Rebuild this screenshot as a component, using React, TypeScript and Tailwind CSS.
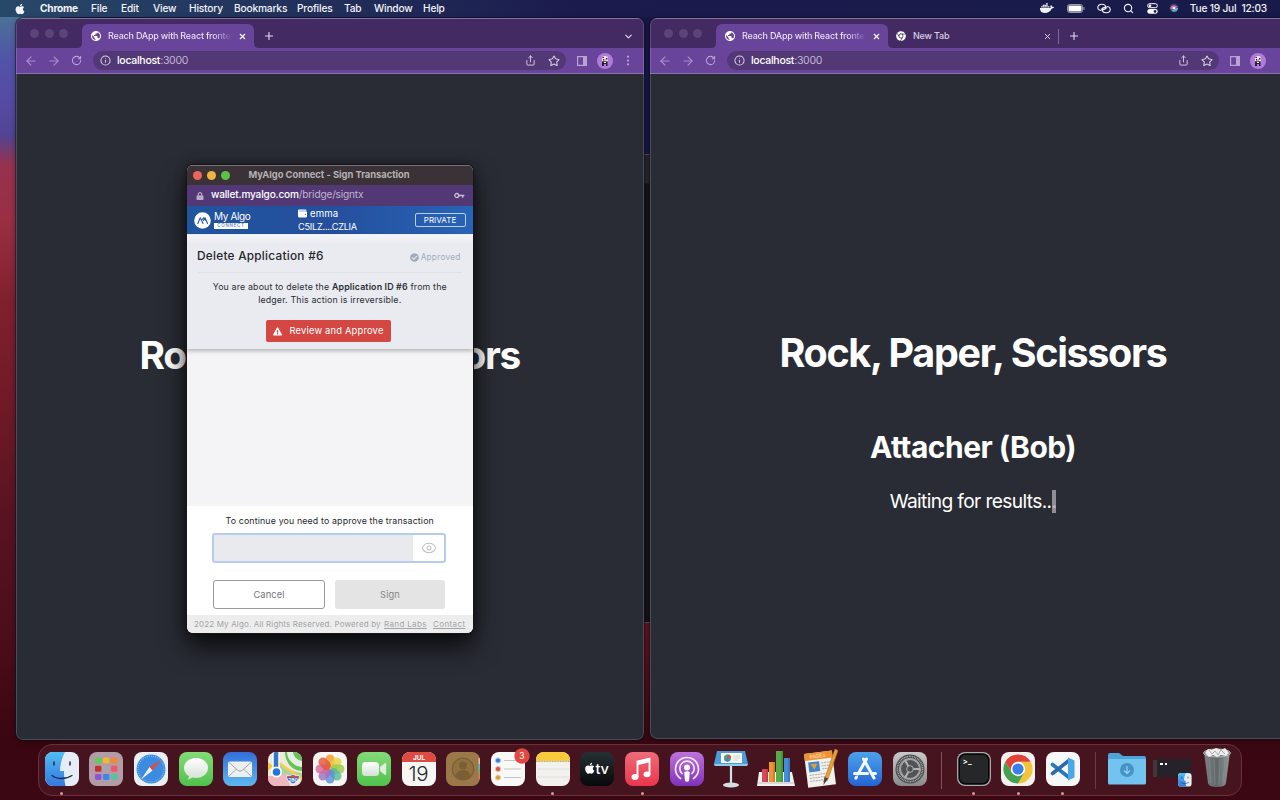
import type { ReactNode } from "react";
import { FaApple, FaDocker, FaChrome, FaWallet, FaCheckCircle, FaExclamationTriangle, FaLock } from "react-icons/fa";
import { MdPublic } from "react-icons/md";
import { ArrowLeft, ArrowRight, RotateCw, Info, Star, X, Plus, ChevronDown, Eye, Search, Share } from "lucide-react";

const menus: [string, string][] = [
  ["File", "w-[30px]"],
  ["Edit", "w-[32px]"],
  ["View", "w-[36px]"],
  ["History", "w-[45px]"],
  ["Bookmarks", "w-[63px]"],
  ["Profiles", "w-[47px]"],
  ["Tab", "w-[30px]"],
  ["Window", "w-[49px]"],
  ["Help", "w-[30px]"],
];

function MenuBar() {
  return (
    <header className="relative flex h-[17px] items-center bg-linear-to-r from-[#284869] via-[#1b1b4d] via-45% to-[#181b49] text-[10.2px] font-medium text-[#f3f4fa]">
      <FaApple className="ml-[14px] size-[12px]" />
      <span className="ml-[14px] w-[51px] font-bold tracking-[-0.250px]">Chrome</span>
      {menus.map(([m, w]) => (
        <span key={m} className={`${w} shrink-0 whitespace-nowrap tracking-[-0.180px]`}>{m}</span>
      ))}
      <div className="ml-auto flex items-center pr-[13px]">
        <FaDocker className="mr-[13px] size-[14px]" />
        <svg className="mr-[12px] h-[9px] w-[18px]" viewBox="0 0 18 9">
          <rect x=".5" y=".5" width="15" height="8" rx="2" fill="none" stroke="#9a9cb5" />
          <rect x="1.5" y="1.5" width="13" height="6" rx="1" fill="#fff" />
          <path d="M17 3v3" stroke="#9a9cb5" />
        </svg>
        <svg className="mr-[12px] h-[11px] w-[14px]" viewBox="0 0 14 11" fill="none" stroke="#f1f2fa" strokeWidth="1.100">
          <path d="M4.500 7.500C2.300 7.500.8 6.300.8 4.500S2.300 1.300 4.700 1.300c2.300 0 4 1.300 4 3 0 1.400-1.200 2.300-2.700 2.300-1 0-1.700-.5-1.700-1.200" />
          <path d="M9.500 3.500c2.200 0 3.700 1.200 3.700 3s-1.500 3.200-3.900 3.200c-2.300 0-4-1.300-4-3 0-1.400 1.200-2.300 2.700-2.300 1 0 1.700.5 1.700 1.200" />
        </svg>
        <Search className="mr-[13px] size-[11px]" strokeWidth={2.4} />
        <svg className="mr-[11px] h-[11px] w-[11px]" viewBox="0 0 11 11">
          <rect x=".6" y=".7" width="9.800" height="4" rx="2" fill="none" stroke="#fff" />
          <circle cx="3" cy="2.700" r="1.300" fill="#fff" />
          <rect x=".3" y="6" width="10.400" height="4.800" rx="2.400" fill="#fff" />
          <circle cx="8" cy="8.400" r="1.300" fill="#1b1b4d" />
        </svg>
        <svg className="mr-[11px] size-[10px]" viewBox="0 0 11 11">
          <circle cx="5.500" cy="5.500" r="5" fill="#343a70" />
          <path d="M1 6c2-5 5-4 9-2-2 0-3 5-9 2z" fill="#d76b9c" />
          <path d="M2 7c3 2 5-3 8-1-1 4-6 5-8 1z" fill="#51b8cf" />
          <circle cx="5.500" cy="5.500" r="1.500" fill="#f0efff" />
        </svg>
        <span className="whitespace-pre tracking-[-0.200px]">Tue 19 Jul  12:03</span>
      </div>
    </header>
  );
}

function ActiveTab() {
  return (
    <div className="relative flex h-6 w-[172px] items-center rounded-t-[6px] bg-[#69449b] pl-[9px]">
      <svg className="absolute bottom-0 -left-[5px] size-[5px]" viewBox="0 0 5 5"><path d="M0 5Q5 5 5 0V5z" fill="#69449b" /></svg>
      <svg className="absolute -right-[5px] bottom-0 size-[5px]" viewBox="0 0 5 5"><path d="M5 5Q0 5 0 0V5z" fill="#69449b" /></svg>
      <MdPublic className="-ml-px size-[12px] shrink-0 text-white" />
      <span className="ml-[6px] w-[124px] shrink-0 overflow-hidden bg-linear-to-r from-[#f0eaf7] from-85% to-[#69449b] bg-clip-text text-[9px] font-medium tracking-[-0.220px] whitespace-nowrap text-transparent">
        Reach DApp with React frontend
      </span>
      <X className="ml-[6px] size-[9px] text-white" strokeWidth={3} />
    </div>
  );
}

function Avatar() {
  return (
    <svg className="size-[16px] shrink-0" viewBox="0 0 16 16">
      <circle cx="8" cy="8" r="8" fill="#b17add" />
      <path d="M5 5q0-2 3-2t3 2v3H5z" fill="#eee9e2" />
      <path d="M5.500 4h1.500v1H5.500zM9 5h1.500v1.500H9zM6 6h1v1.500H6zM5 8.500h5.500V13H9v-2H7v2H5zM7.500 6.500h1v1h-1z" fill="#272129" />
      <path d="M7 9h2v1H7z" fill="#fff" />
    </svg>
  );
}

function SidePanel() {
  return (
    <svg className="size-[10px] shrink-0" viewBox="0 0 10 10">
      <path d="M.6.6h8.800v8.800H.6z" fill="none" stroke="#b8a3d3" strokeWidth="1.200" />
      <path d="M6 0h4v10H6z" fill="#b8a3d3" />
    </svg>
  );
}

function Toolbar({ right }: { right?: boolean }) {
  return (
    <div className="flex h-[26px] items-center border-b border-[#8a70b0] bg-[#69449b] pl-[8px]">
      <ArrowLeft className="size-[14px] text-[#a98fc9]" strokeWidth={1.9} />
      <ArrowRight className="ml-[9px] size-[14px] text-[#a98fc9]" strokeWidth={1.9} />
      <RotateCw className="ml-[10px] size-[11px] text-[#b9a5d5]" strokeWidth={2.2} />
      <div className={`ml-[11px] flex h-[19px] shrink-0 items-center rounded-full bg-[#523976] pl-[7px] ${right ? "w-[492px]" : "w-[473px]"}`}>
        <Info className="size-[11px] text-[#d8cde6]" strokeWidth={2.2} />
        <span className="ml-[6px] pt-px text-[10.500px] font-medium tracking-[-0.280px] text-white">
          localhost<span className="font-normal text-[#c3b3d6]">:3000</span>
        </span>
        <Share className="ml-auto size-[11px] text-[#d5c9e4]" strokeWidth={2.1} />
        <Star className="mr-[6px] ml-[12px] size-[12px] text-[#d5c9e4]" strokeWidth={2.2} />
      </div>
      <div className="ml-[11px] flex shrink-0 items-center gap-[10px]">
        <SidePanel />
        <Avatar />
        {!right && (
          <svg className="ml-[3px] h-[11px] w-[4px]" viewBox="0 0 4 12" fill="#b8a3d3"><circle cx="2" cy="1.800" r="1.200" /><circle cx="2" cy="6" r="1.200" /><circle cx="2" cy="10.200" r="1.200" /></svg>
        )}
      </div>
    </div>
  );
}

function LightsOff() {
  return (
    <div className="flex gap-[5.500px] pt-[10px] pl-[14px]">
      <i className="size-[9px] rounded-full bg-[#5b4478]" />
      <i className="size-[9px] rounded-full bg-[#5b4478]" />
      <i className="size-[9px] rounded-full bg-[#5b4478]" />
    </div>
  );
}

function BrowserWindow({ right, place, children }: { right?: boolean; place: string; children: ReactNode }) {
  return (
    <section className={`absolute ${place} overflow-hidden rounded-[7px] bg-[#292c34] shadow-[0_0_0_1px_#0c0c2080,0_2px_6px_#0005]`}>
      <div className="flex h-[30px] justify-start border-t border-[#6d5a86] bg-[#432a62]">
        <div className="w-[66px]"><LightsOff /></div>
        <div className="flex flex-1 items-end">
          <ActiveTab />
          {right && (
            <div className="flex h-6 items-center text-[#d9cfe6]">
              <FaChrome className="ml-[8px] size-[10px] text-white" />
              <span className="ml-[7px] w-[130px] text-[9px] font-medium tracking-[-0.200px]">New Tab</span>
              <X className="size-[9px]" strokeWidth={2.6} />
              <i className="ml-[6px] h-[15px] w-px bg-[#7c6796]" />
            </div>
          )}
          <div className="flex h-6 items-center">
            <Plus className="ml-[9px] size-[12px] text-[#e4dcee]" strokeWidth={2.2} />
          </div>
          <div className={`ml-auto flex h-6 items-center ${right ? "pr-0" : "pr-[10px]"}`}>
            <ChevronDown className={`size-[11px] text-[#e4dcee] ${right ? "mr-[1px]" : ""}`} strokeWidth={2.4} />
          </div>
        </div>
      </div>
      <Toolbar right={right} />
      {children}
      <div className={`pointer-events-none absolute inset-0 rounded-[7px] border border-[#ffffff28] ${right ? "border-r-0" : ""}`} />
    </section>
  );
}

function Popup() {
  return (
    <section className="absolute top-[165px] left-[187px] flex h-[468px] w-[285.500px] flex-col overflow-hidden rounded-[6px] bg-[#f4f4f7] shadow-[0_0_0_1px_#15161b,0_14px_26px_#000b,0_0_12px_#0007]">
      <div className="flex h-[20px] shrink-0 items-center border-t border-[#77727a] bg-[#3a3237]">
        <i className="ml-[6px] size-[9px] rounded-full bg-[#ed6559]" />
        <i className="ml-[5px] size-[9px] rounded-full bg-[#f0b540]" />
        <i className="ml-[5px] size-[9px] rounded-full bg-[#5bc148]" />
        <span className="ml-[18.500px] text-[9.400px] font-bold tracking-[-0.030px] whitespace-nowrap text-[#b6b1b4]">MyAlgo Connect - Sign Transaction</span>
      </div>
      <div className="flex h-[21px] shrink-0 items-center bg-[#523976] px-[8px]">
        <FaLock className="ml-px size-[8px] text-[#b9aac9]" />
        <span className="ml-[7px] pb-px text-[10.100px] font-medium tracking-[-0.170px] text-white">
          wallet.myalgo.com<span className="font-normal text-[#c1b2d2]">/bridge/signtx</span>
        </span>
        <svg className="mb-px ml-auto h-[7px] w-[11px]" viewBox="0 0 11 7" fill="none" stroke="#c9bdd8" strokeWidth="1.300"><circle cx="2.800" cy="3.500" r="2" /><path d="M4.800 3.500h5.500M8.700 3.500v2.200" /></svg>
      </div>
      <div className="flex h-[28px] shrink-0 items-center bg-linear-to-r from-[#20559f] via-[#244f9d] to-[#2864b6] px-[7px] text-white">
        <svg className="size-[17px] shrink-0" viewBox="0 0 17 17">
          <circle cx="8.500" cy="8.500" r="8.300" fill="#fff" />
          <path d="M3.800 11.500 6.200 5.800l2.800 5.700M8.300 7.500l1.300-1.700 2.200 2.700M9.500 8.500l1.500-2.700 2.500 5.700" fill="none" stroke="#2459a3" strokeWidth="1.100" strokeLinecap="round" strokeLinejoin="round" />
        </svg>
        <div className="ml-[3px] flex w-[84px] flex-col">
          <span className="text-[10px] leading-[11px] tracking-[-0.350px]">My Algo</span>
          <span className="mt-px h-[6px] w-[34px] bg-white text-center text-[4.500px] leading-[6px] font-semibold tracking-[0.700px] text-[#6d89b8]">CONNECT</span>
        </div>
        <div className="flex flex-col text-[9.200px] leading-[13px]">
          <span className="flex items-center gap-[3px] text-[9.600px] tracking-[0.100px]"><FaWallet className="size-[9px]" />emma</span>
          <span className="tracking-[-0.250px]">C5ILZ....CZLIA</span>
        </div>
        <span className="ml-auto flex h-[14px] w-[51px] items-center justify-center rounded-[2px] border border-[#b9cdea] text-[8px] tracking-[0.050px]">PRIVATE</span>
      </div>
      <div className="mt-[1px] flex h-[114px] shrink-0 flex-col bg-linear-to-b from-[#f5f5f8] to-[#e9ebf1] to-8% shadow-[0_2px_4px_#0004]">
        <div className="mx-[11px] flex h-[38px] items-center justify-between border-b border-[#dfe1e7] pt-[7px]">
          <span className="-ml-px text-[11.800px] font-medium tracking-[0.260px] text-[#24262b]">Delete Application #6</span>
          <span className="flex items-center gap-[2px] pr-px text-[8.300px] tracking-[0.220px] text-[#9eacbf]"><FaCheckCircle className="size-[9px]" />Approved</span>
        </div>
        <p className="mt-[7px] text-center text-[8.800px] leading-[13px] tracking-[0.170px] whitespace-nowrap text-[#292d33]">
          You are about to delete the <b className="font-semibold">Application ID #6</b> from the<br />ledger. This action is irreversible.
        </p>
        <div className="ml-[79px] mt-[14px] flex h-[22px] w-[125px] items-center justify-center gap-[7px] rounded-[2px] bg-[#d54743] text-[9.400px] tracking-[0.180px] whitespace-nowrap text-white">
          <FaExclamationTriangle className="size-[9px] shrink-0" />Review and Approve
        </div>
      </div>
      <div className="mt-auto flex h-[109px] shrink-0 flex-col bg-white">
        <span className="mt-[9px] text-center text-[8.800px] leading-[11px] tracking-[0.150px] text-[#25282d]">To continue you need to approve the transaction</span>
        <div className="mt-[7px] ml-[25px] flex h-[30px] w-[234px] rounded-[3px] border-2 border-[#b6cbee]">
          <div className="flex-1 bg-[#e9eaed]" />
          <div className="flex w-[31px] items-center justify-center"><Eye className="size-[16px] text-[#bfc1c5]" strokeWidth={1.6} /></div>
        </div>
        <div className="mt-[17px] ml-[26px] flex h-[29px] w-[232px] gap-[10px] text-[9.300px] tracking-[0.100px] text-[#777]">
          <span className="flex flex-1 items-center justify-center rounded-[3px] border border-[#999]">Cancel</span>
          <span className="flex flex-1 items-center justify-center rounded-[3px] bg-[#e4e4e4] text-[#858585]">Sign</span>
        </div>
      </div>
      <footer className="flex h-[18px] shrink-0 items-center bg-[#ededee] pl-[7px] text-[8px] whitespace-nowrap text-[#a3a4a7]">
        <span className="w-[190px] tracking-[0.150px]">2022 My Algo. All Rights Reserved. Powered by</span>
        <u className="mr-[7px] w-[42px] tracking-[0.350px]">Rand Labs</u>
        <u className="tracking-[0.400px]">Contact</u>
      </footer>
    </section>
  );
}

function Tile({ fill, children }: { fill: string; children?: ReactNode }) {
  return (
    <>
      <rect width="34" height="34" rx="8" fill={fill} />
      {children}
    </>
  );
}

function DockItem({ dot, children }: { dot?: boolean; children: ReactNode }) {
  return (
    <div className="flex h-full w-[44.650px] shrink-0 flex-col items-center pt-[7px]">
      <svg className="size-[34px] shrink-0 overflow-visible" viewBox="0 0 34 34">{children}</svg>
      {dot && <i className="mt-[6px] size-[3px] rounded-full bg-[#d59a9a]" />}
    </div>
  );
}

const padColors = ["#5fce56", "#f3b62c", "#ee8a31", "#c4302d", "#a3a7ad", "#f25566", "#9254d6", "#3d86ee", "#55c3a0"];
const petals = ["#f19a2c", "#e3d444", "#9bc84b", "#56b99b", "#5a90d5", "#9b72c4", "#d8699a", "#e7553f"];

function Finder() {
  return (
    <>
      <rect width="34" height="34" rx="8" fill="#e6edf6" />
      <path d="M8 0h12c-3 6-5 12-5 19h4c0 5 .5 11 1.500 15H8a8 8 0 0 1-8-8V8a8 8 0 0 1 8-8z" fill="url(#finder)" />
      <path d="M9 10v3M25 10v3" stroke="#1d2c4a" strokeWidth="1.500" strokeLinecap="round" />
      <path d="M7 23.500c5 4 14 4 20 0" stroke="#1d2c4a" strokeWidth="1.300" fill="none" strokeLinecap="round" />
    </>
  );
}

function Dock() {
  return (
    <nav className="absolute top-[744px] left-[38px] flex h-[52px] w-[1204px] rounded-[14px] border border-[#6a2f3a] bg-[#46141f] pl-[0.400px]">
      <svg className="absolute size-0">
        <defs>
          <linearGradient id="finder" x2="0" y2="1"><stop stopColor="#51bdf2" /><stop offset="1" stopColor="#3479df" /></linearGradient>
          <linearGradient id="green" x2="0" y2="1"><stop stopColor="#84dc78" /><stop offset="1" stopColor="#4fc24b" /></linearGradient>
          <linearGradient id="blue" x2="0" y2="1"><stop stopColor="#336fd9" /><stop offset="1" stopColor="#5db9ee" /></linearGradient>
          <linearGradient id="store" x2="0" y2="1"><stop stopColor="#4ba2eb" /><stop offset="1" stopColor="#2465d4" /></linearGradient>
          <linearGradient id="pod" x2="0" y2="1"><stop stopColor="#bd73dc" /><stop offset="1" stopColor="#8131ba" /></linearGradient>
          <linearGradient id="music" x2="0" y2="1"><stop stopColor="#ee6c78" /><stop offset="1" stopColor="#ea354c" /></linearGradient>
          <linearGradient id="white" x2="0" y2="1"><stop stopColor="#fff" /><stop offset="1" stopColor="#d3dfd4" /></linearGradient>
          <linearGradient id="tv" x2="0" y2="1"><stop stopColor="#263034" /><stop offset="1" stopColor="#08090a" /></linearGradient>
          <linearGradient id="gray" x2="0" y2="1"><stop stopColor="#c9c9c9" /><stop offset="1" stopColor="#8a8a8b" /></linearGradient>
          <linearGradient id="bin"><stop stopColor="#7e8284" /><stop offset=".5" stopColor="#606769" /><stop offset="1" stopColor="#969a9b" /></linearGradient>
          <clipPath id="tile"><rect width="34" height="34" rx="8" /></clipPath>
        </defs>
      </svg>
      <DockItem dot><Finder /></DockItem>
      <DockItem>
        <Tile fill="#b29ca6">
          {padColors.map((c, i) => <rect key={i} x={6 + (i % 3) * 8} y={5.500 + Math.floor(i / 3) * 8.200} width="6.400" height="6" rx="1.300" fill={c} />)}
        </Tile>
      </DockItem>
      <DockItem>
        <Tile fill="#eceff2">
          <circle cx="17" cy="17" r="14.500" fill="#3b8ce1" />
          <circle cx="17" cy="17" r="13" fill="none" stroke="#a9d2f7" strokeWidth="1.300" strokeDasharray=".6 1.500" />
          <path d="M28 7.500 15.500 15l3 3.500z" fill="#e24b42" /><path d="M7 27.500l8.500-12.500 3 3.500z" fill="#f1f1f1" />
        </Tile>
      </DockItem>
      <DockItem>
        <Tile fill="url(#green)"><path d="M17 6c7 0 12 4.500 12 10s-5 10-12 10c-1.500 0-2.800-.2-4-.5-1 1-2.500 1.900-4.500 2 1.200-1 1.600-2.200 1.500-3.200C7 22.500 5 19.500 5 16 5 10.500 10 6 17 6z" fill="url(#white)" /></Tile>
      </DockItem>
      <DockItem>
        <Tile fill="url(#blue)"><rect x="5" y="9.500" width="24" height="15.500" rx="2" fill="#eeefef" /><path d="M5.500 10 15 18.500q2 1.500 4 0L28.500 10M5.500 24.500l8-7.500M28.500 24.500l-8-7.500" fill="none" stroke="#a3a8ab" /></Tile>
      </DockItem>
      <DockItem>
        <Tile fill="#efe9dc">
          <g clipPath="url(#tile)">
            <path d="M17 0h17v19C24 19 17 10 17 0z" fill="#62c458" />
            <path d="M22-2a13 13 0 0 0 14 14" stroke="#e4efdf" strokeWidth="6" fill="none" />
            <path d="M12 13c6 2 10 6 22 8v4H13z" fill="#a6d596" />
            <path d="M11 11l23 16" stroke="#f5cd54" strokeWidth="2.500" />
            <path d="M11 24l9-3 2 13H0V24z" fill="#f0b6bd" />
            <path d="M0 10l5 4-5 5z" fill="#f5c83c" />
            <path d="M8 0v19" stroke="#fff" strokeWidth="7" /><path d="M8 0v17" stroke="#2f79c8" strokeWidth="4.500" />
            <circle cx="8.500" cy="20" r="5.500" fill="#fff" /><circle cx="8.500" cy="20" r="3.800" fill="#2675d8" />
          </g>
          <path d="M19 23.500q2.500 1 6-1 3.500 2 6 1 1.500 5-6 8.500-7.500-3.500-6-8.500z" fill="#2b6cc0" stroke="#fff" strokeWidth=".7" /><path d="M19.500 24q2.500 1 5.500-1 3 2 5.500 1l.3 1.500H19.300z" fill="#dc4a43" />
          <text x="25" y="29.800" textAnchor="middle" fontSize="4.800" fontWeight="700" fill="#fff">280</text>
        </Tile>
      </DockItem>
      <DockItem>
        <Tile fill="#f6f6f4">
          {petals.map((c, i) => <rect key={c} x="12.500" y="2.500" width="9" height="14" rx="4.500" fill={c} opacity=".82" transform={`rotate(${i * 45} 17 17)`} />)}
        </Tile>
      </DockItem>
      <DockItem><Tile fill="url(#green)"><rect x="5" y="10" width="17" height="14" rx="3.500" fill="url(#white)" /><path d="M23 15l5-4q1.200 0 1.200 1v10q0 1-1.200 1l-5-4z" fill="#e2ece1" /></Tile></DockItem>
      <DockItem>
        <Tile fill="#f6f6f5">
          <path d="M0 10V8a8 8 0 0 1 8-8h18a8 8 0 0 1 8 8v2z" fill="#dc4a41" />
          <text x="17" y="8" textAnchor="middle" fontSize="6.500" fontWeight="700" fill="#fff">JUL</text>
          <text x="16.500" y="28.500" textAnchor="middle" fontSize="20.500" fontWeight="300" letterSpacing="-.3" fill="#29292b">19</text>
        </Tile>
      </DockItem>
      <DockItem>
        <Tile fill="#9b7848">
          <g clipPath="url(#tile)"><path d="M33.500 6v6" stroke="#dcc6a1" strokeWidth="2" /><path d="M33.500 12v5" stroke="#58b8e4" strokeWidth="2" /><path d="M33.500 17v5" stroke="#67b968" strokeWidth="2" /><path d="M33.500 22v5" stroke="#dd7954" strokeWidth="2" /></g>
          <circle cx="17" cy="17" r="10.800" fill="#92703f" stroke="#7c5e35" strokeWidth="1.200" /><circle cx="17" cy="13.500" r="4" fill="#7c5e35" /><path d="M9.500 24c1-8 14-8 15 0-4 4-11 4-15 0z" fill="#7c5e35" />
        </Tile>
      </DockItem>
      <DockItem>
        <Tile fill="#f8f8f7">
          <path d="M13 8.500h17M13 17h17M13 25.500h17" stroke="#c5c5c7" />
          <circle cx="7" cy="8.500" r="2.600" fill="#347cd9" stroke="#b5d0ee" /><circle cx="7" cy="17" r="2.600" fill="#df4f40" stroke="#efbdb6" /><circle cx="7" cy="25.500" r="2.600" fill="#e09a37" stroke="#eed4af" />
          <circle cx="31" cy="4" r="7.700" fill="#e14842" /><text x="31" y="7" textAnchor="middle" fontSize="8.500" fill="#fff">3</text>
        </Tile>
      </DockItem>
      <DockItem dot><Tile fill="#f2f1ee"><path d="M0 9V8a8 8 0 0 1 8-8h18a8 8 0 0 1 8 8v1z" fill="#f9ca3b" /><path d="M0 9.500h34" stroke="#aba79a" strokeDasharray="1 .6" /><path d="M1 17h32M1 25h32" stroke="#e0dfdc" /></Tile></DockItem>
      <DockItem><Tile fill="url(#tv)"><FaApple x={3.500} y={10} size={12.500} color="#fff" /><text x="15.500" y="22" fontSize="14.500" fontWeight="500" letterSpacing="-.3" fill="#fff">tv</text></Tile></DockItem>
      <DockItem dot><Tile fill="url(#music)"><path d="M12.500 25V9.500l12-2.800v15" fill="none" stroke="#fff" strokeWidth="1.900" /><path d="M12.500 11l12-2.800" stroke="#fff" strokeWidth="4" /><ellipse cx="10" cy="25" rx="3.500" ry="2.900" fill="#fff" /><ellipse cx="22" cy="22.300" rx="3.500" ry="2.900" fill="#fff" /></Tile></DockItem>
      <DockItem>
        <Tile fill="url(#pod)"><g fill="none" stroke="#f7eafc" strokeWidth="1.700" strokeLinecap="round"><path d="M10.500 26.500a11.500 11.500 0 1 1 13 0" /><path d="M12 21.500a7.200 7.200 0 1 1 10 0" /></g><circle cx="17" cy="15.500" r="3" fill="#fff" /><path d="M14.200 20q2.800-1.500 5.600 0L19 29q-2 1.500-4 0z" fill="#fff" /></Tile>
      </DockItem>
      <DockItem>
        <path d="M3-1h28l3 13q0 1.500-2 1.500H1Q-.5 13.500 0 12z" fill="#4b9cdb" /><path d="M0 12h34l-1 2H1z" fill="#8dcaf0" /><rect x="7" y="1" width="21" height="10" fill="#f8f8f5" />
        <circle cx="13.500" cy="6" r="3.600" fill="#45a771" /><path d="M13.500 6V2.400a3.600 3.600 0 0 1 3.600 3.600z" fill="#df4c58" /><path d="M13.500 6l-3 2a3.600 3.600 0 0 0 5 1z" fill="#5477ce" /><path d="M19.500 4h7M19.500 6h7M19.500 8h5" stroke="#c7c7cc" strokeWidth=".8" />
        <path d="M17 14v17" stroke="#cfe0e9" strokeWidth="2.200" /><ellipse cx="17" cy="33" rx="8" ry="2.600" fill="#d4dfe5" />
      </DockItem>
      <DockItem>
        <path d="M0 20h33l3 14H-2z" fill="#f1eff0" /><path d="M-1 31h36" stroke="#c7c1c4" /><path d="M3 17h6v13H3z" fill="#d9485a" /><path d="M10 10h6v20h-6z" fill="#ef952f" /><path d="M17-1h7v31h-7z" fill="#54ac49" /><path d="M25 6h6v24h-6z" fill="#448cdc" /><path d="M7 17h2v13H7zM14 10h2v20h-2zM22-1h2v31h-2zM29 6h2v24h-2z" fill="#0002" />
      </DockItem>
      <DockItem>
        <g transform="rotate(-7 17 17)"><rect x="2" y="0" width="28" height="34" fill="#f2f1ed" /><path d="M2 0h28v7H2z" fill="#ef9332" /><text x="15" y="5.500" fontSize="5" textAnchor="middle" fill="#fbe4c4">PAGES</text><rect x="5" y="9" width="11" height="10" fill="#3d88cc" /><path d="M7 11h7l-3.500 6z" fill="#eb9a31" /><path d="M18 11h9M18 14h9M18 17h8M5 22h19M5 25h19M5 28h16" stroke="#aaa" strokeWidth="1" strokeDasharray="2 .7" /></g>
        <path d="M31-3l3 1.500-10.500 30-4 1.500z" fill="#e9a13c" stroke="#ad6c1d" strokeWidth=".6" /><path d="M20.500 25l3.500 1.500L19.500 33z" fill="#424247" />
      </DockItem>
      <DockItem><Tile fill="url(#store)"><g stroke="#f4f8ff" strokeWidth="3" strokeLinecap="round"><path d="M18.500 7 10 22M15.500 7l10.500 19M6.500 21.500h13M24.500 21.500h3M8.500 25l-.6 1.200" /></g></Tile></DockItem>
      <DockItem>
        <Tile fill="url(#gray)">
          <circle cx="17" cy="17" r="14.500" fill="#48494b" /><circle cx="17" cy="17" r="12.600" fill="none" stroke="#a6a7a8" strokeWidth="1.700" strokeDasharray="1 .7" /><circle cx="17" cy="17" r="10" fill="#525355" stroke="#a2a3a4" strokeWidth="2" /><path d="M17 17h10M17 17l-5-8.700M17 17l-5 8.700" stroke="#b1b2b2" strokeWidth="2" /><circle cx="17" cy="17" r="3.300" fill="#4f5052" stroke="#b1b2b2" />
        </Tile>
      </DockItem>
      <div className="flex w-[19px] shrink-0 items-center justify-center"><i className="h-[37px] w-px bg-[#86505b]" /></div>
      <DockItem dot>
        <rect x="0" width="34" height="34" rx="8" fill="#aaa" /><rect x="1.300" y="1.300" width="31.400" height="31.400" rx="7" fill="#060707" /><rect x="3" y="3" width="28" height="28" rx="5" fill="#252728" /><text x="5.500" y="12" fontSize="8" fontWeight="600" fill="#fff">{">_"}</text>
      </DockItem>
      <DockItem dot>
        <Tile fill="#f3f2ef">
          <path d="M29.600 9.700H17l6.300 11L17 31.500A14.500 14.500 0 0 0 29.600 9.700z" fill="#f4c438" />
          <path d="M4.400 9.700A14.500 14.500 0 0 0 17 31.500l6.300-10.800L10.700 20.600z" fill="#42a251" />
          <path d="M4.400 9.700A14.500 14.500 0 0 1 29.600 9.700H17l-6.300 10.900z" fill="#df4437" />
          <circle cx="17" cy="17" r="7.200" fill="#fff" /><circle cx="17" cy="17" r="5.600" fill="#397fe8" />
        </Tile>
      </DockItem>
      <DockItem dot>
        <Tile fill="#f6f8fa"><path d="M6.500 12.500 23 25.500" stroke="#2678be" strokeWidth="3.600" strokeLinecap="round" /><path d="M6.500 21.500 23 8.500" stroke="#2c69ae" strokeWidth="3.600" strokeLinecap="round" /><path d="M22 5.500 28.500 8.500v17L22 28.500z" fill="#4aa8e8" /></Tile>
      </DockItem>
      <div className="flex w-[20px] shrink-0 items-center justify-center"><i className="h-[37px] w-px bg-[#6e3744]" /></div>
      <DockItem><path d="M-2 3q0-2 2-2h9l4 3h21q2 0 2 2v24H-2z" fill="#4ca5d7" /><path d="M-2 8q0-1 1-1h36q1 0 1 1v23q0 1.500-1.500 1.500h-35Q-2 32.500-2 31z" fill="#72c3f0" /><circle cx="17" cy="18" r="7" fill="#4794c3" /><path d="M17 14v7M14 18.500l3 3 3-3" fill="none" stroke="#8bd0f5" strokeWidth="1.300" /></DockItem>
      <DockItem>
        <rect x="-2" y="7" width="38" height="18" fill="#252329" /><path d="M-2 8h4v17h-4z" fill="#45343c" /><path d="M5 11h3v2H5zM10 11h2v2h-2z" fill="#fff" /><g transform="translate(23 21) scale(.4)"><Finder /></g>
      </DockItem>
      <DockItem>
        <path d="M4 0h26l-4 31q-.5 4-9 4t-9-4z" fill="url(#bin)" /><path d="M9 6l2 25M14 7l1 26M20 7l-1 26M25 6l-2 25" stroke="#9ba09f" strokeWidth=".6" opacity=".6" /><ellipse cx="17" cy="1" rx="13.500" ry="4" fill="#6b706f" stroke="#b9bcbb" /><path d="M5 1l3-4 4 1 4-2 5 2 4-2 4 5-3 3-5-1-4 2-4-2-4 2z" fill="#eceeed" /><path d="M9-2l3 4 3-3 3 4 3-5 4 4" fill="none" stroke="#9a9e9e" strokeWidth=".8" />
      </DockItem>
    </nav>
  );
}

export default function App() {
  return (
    <main className="relative h-[800px] w-[1280px] overflow-hidden bg-[linear-gradient(180deg,#4c7196_17px,#5253a8_60px,#554ba3_100px,#514492_135px,#96324f_165px,#992f43_220px,#80202f_300px,#6c1926_420px,#571321_520px,#4a0e1a_640px,#3a0611_740px,#3b0713_800px)] font-['Inter',sans-serif]">
      <div className="absolute top-0 left-[60px] h-[155px] w-[1220px] bg-[#171747]" />
      <div className="absolute top-[620px] left-[60px] h-[130px] w-[1220px] bg-linear-to-b from-[#68131e] to-[#390712]" />
      <div className="absolute top-[154px] left-[600px] h-[469px] w-[80px] border-y border-[#5b4e55] bg-linear-to-b from-[#29262b] from-[28px] to-[#151316] to-[29px]" />
      <MenuBar />
      <BrowserWindow place="top-[18px] left-[16px] h-[722px] w-[627.500px]">
        <h1 className="mt-[257px] text-center text-[38.800px] leading-[48px] font-bold tracking-[-1.290px] whitespace-nowrap text-white">Rock, Paper, Scissors</h1>
      </BrowserWindow>
      <BrowserWindow right place="top-[18px] left-[650px] h-[721px] w-[646px]">
        <div className="flex flex-col items-center text-white">
          <h1 className="mt-[255px] text-[39.500px] leading-[48px] font-bold tracking-[-1.330px] whitespace-nowrap">Rock, Paper, Scissors</h1>
          <h2 className="mt-[52px] text-[30px] leading-[36px] font-bold tracking-[-0.520px] whitespace-nowrap">Attacher (Bob)</h2>
          <div className="mt-[24px] flex h-[24px] items-center text-[19.200px] leading-[24px] whitespace-nowrap">
            <span className="tracking-[-0.640px]">Waiting for results...</span>
            <i className="-ml-[4px] h-[23px] w-[4px] bg-[#a7a8abcc]" />
          </div>
        </div>
      </BrowserWindow>
      <Popup />
      <Dock />
    </main>
  );
}
